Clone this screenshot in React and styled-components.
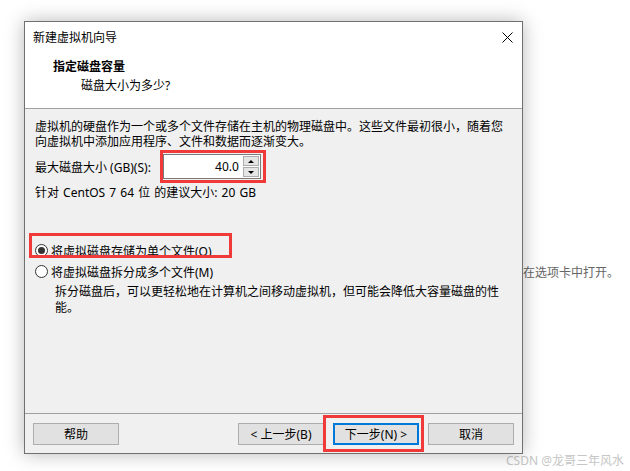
import React from 'react';
import styled, { createGlobalStyle } from 'styled-components';

const GlobalStyle = createGlobalStyle`
  html, body {
    margin: 0;
    padding: 0;
    background: #fff;
  }
  body {
    font-family: "Noto Sans", "Noto Sans CJK SC", sans-serif;
    font-size: 12px;
    color: #000;
  }
`;

const Page = styled.div`
  position: relative;
  width: 630px;
  height: 471px;
  overflow: hidden;
  box-sizing: border-box;
  padding: 21px 0 0 24px;
  display: flex;
  align-items: flex-start;
`;

const BackText = styled.div`
  margin: 244px 0 0 -12px;
  color: #666;
  line-height: 16px;
  white-space: nowrap;
`;

const Dialog = styled.div`
  position: relative;
  z-index: 1;
  flex-shrink: 0;
  width: 499px;
  height: 433px;
  box-sizing: border-box;
  border: 1px solid #707070;
  background: #f0f0f0;
  box-shadow: 0 0 18px rgba(0, 0, 0, 0.28);
  display: flex;
  flex-direction: column;
`;

const Header = styled.div`
  flex-shrink: 0;
  height: 86px;
  background: #fff;
  border-bottom: 1px solid #a0a0a0;
`;

const TitleBar = styled.div`
  height: 30px;
  padding: 0 9px 0 8px;
  display: flex;
  align-items: center;
  justify-content: space-between;
`;

const Heading = styled.div`
  margin-top: 7px;
  padding-left: 28px;
  line-height: 16px;
  font-weight: bold;
`;

const SubHeading = styled.div`
  margin-top: 3px;
  padding-left: 56px;
  line-height: 16px;
`;

const Body = styled.div`
  flex: 1;
  padding: 10px 0 0 10px;
  display: flex;
  flex-direction: column;
  align-items: flex-start;
`;

const Para = styled.div`
  line-height: 15px;
  white-space: nowrap;
`;

const SizeRow = styled.div`
  margin-top: 5px;
  display: flex;
  align-items: center;
  gap: 12px;
`;

const Mark = styled.div`
  position: relative;
  &::after {
    content: '';
    position: absolute;
    box-sizing: border-box;
    top: ${p => p.$top}px;
    left: ${p => p.$left}px;
    width: ${p => p.$w}px;
    height: ${p => p.$h}px;
    border: 3px solid #f03a3a;
    pointer-events: none;
  }
`;

const NumberBox = styled.div`
  width: 98px;
  height: 25px;
  box-sizing: border-box;
  border: 1px solid #7a7a7a;
  background: #fff;
  display: flex;
  align-items: stretch;
`;

const NumberValue = styled.div`
  flex: 1;
  text-align: right;
  padding-right: 4px;
  line-height: 23px;
`;

const Spinner = styled.div`
  width: 16px;
  padding: 1px 1px 1px 0;
  display: flex;
  flex-direction: column;
  gap: 1px;
`;

const SpinButton = styled.div`
  flex: 1;
  border: 1px solid #adadad;
  background: #e5e5e5;
  display: flex;
  align-items: center;
  justify-content: center;
  &::before {
    content: '';
    border-left: 3px solid transparent;
    border-right: 3px solid transparent;
    ${p => (p.$down ? 'border-top: 3px solid #000;' : 'border-bottom: 3px solid #000;')}
  }
`;

const Hint = styled.div`
  margin-top: 6px;
  line-height: 15px;
  word-spacing: 1px;
`;

const RadioGroup = styled.div`
  margin-top: 40px;
  display: flex;
  flex-direction: column;
`;

const RadioRow = styled.div`
  height: 21px;
  display: flex;
  align-items: center;
  gap: 3px;
  white-space: nowrap;
`;

const RadioCircle = styled.span`
  width: 13px;
  height: 13px;
  box-sizing: border-box;
  border: 1px solid #333;
  border-radius: 50%;
  background: #fff;
  display: flex;
  align-items: center;
  justify-content: center;
  &::before {
    content: '';
    width: 7px;
    height: 7px;
    border-radius: 50%;
    background: ${p => (p.$checked ? '#333' : 'transparent')};
  }
`;

const Desc = styled.div`
  margin-top: 2px;
  padding-left: 20px;
  line-height: 16px;
  white-space: nowrap;
`;

const Footer = styled.div`
  flex-shrink: 0;
  border-top: 1px solid #a0a0a0;
  padding: 9px 8px 8px;
  display: flex;
  align-items: center;
  gap: 9px;
`;

const Spacer = styled.div`
  flex: 1;
`;

const Button = styled.div`
  width: 86px;
  height: 22px;
  box-sizing: border-box;
  border: ${p => (p.$default ? '2px solid #0078d7' : '1px solid #adadad')};
  background: #e1e1e1;
  display: flex;
  align-items: center;
  justify-content: center;
  white-space: nowrap;
`;

const Watermark = styled.div`
  position: absolute;
  left: 506px;
  top: 452px;
  font-size: 12px;
  line-height: 17px;
  color: #c6c6c6;
  white-space: nowrap;
`;

const CloseIcon = () => (
  <svg width="11" height="11" viewBox="0 0 11 11">
    <path d="M0.5 0.5 L10.5 10.5 M10.5 0.5 L0.5 10.5" stroke="#000" strokeWidth="1" />
  </svg>
);

const App = () => (
  <Page>
    <GlobalStyle />
    <Dialog>
      <Header>
        <TitleBar>
          <span>新建虚拟机向导</span>
          <CloseIcon />
        </TitleBar>
        <Heading>指定磁盘容量</Heading>
        <SubHeading>磁盘大小为多少?</SubHeading>
      </Header>
      <Body>
        <Para>
          虚拟机的硬盘作为一个或多个文件存储在主机的物理磁盘中。这些文件最初很小，随着您
          <br />
          向虚拟机中添加应用程序、文件和数据而逐渐变大。
        </Para>
        <SizeRow>
          <span>最大磁盘大小 (GB)(S):</span>
          <Mark $top={-4} $left={-3} $w={106} $h={33}>
            <NumberBox>
              <NumberValue>40.0</NumberValue>
              <Spinner>
                <SpinButton />
                <SpinButton $down />
              </Spinner>
            </NumberBox>
          </Mark>
        </SizeRow>
        <Hint>针对 CentOS 7 64 位 的建议大小: 20 GB</Hint>
        <RadioGroup>
          <Mark $top={-7} $left={-6} $w={203} $h={25}>
            <RadioRow>
              <RadioCircle $checked />
              将虚拟磁盘存储为单个文件(O)
            </RadioRow>
          </Mark>
          <RadioRow>
            <RadioCircle />
            将虚拟磁盘拆分成多个文件(M)
          </RadioRow>
          <Desc>
            拆分磁盘后，可以更轻松地在计算机之间移动虚拟机，但可能会降低大容量磁盘的性
            <br />
            能。
          </Desc>
        </RadioGroup>
      </Body>
      <Footer>
        <Button>帮助</Button>
        <Spacer />
        <Button>&lt; 上一步(B)</Button>
        <Mark $top={-8} $left={-10} $w={101} $h={37}>
          <Button $default>下一步(N) &gt;</Button>
        </Mark>
        <Button>取消</Button>
      </Footer>
    </Dialog>
    <BackText>以在选项卡中打开。</BackText>
    <Watermark>CSDN @龙哥三年风水</Watermark>
  </Page>
);

export default App;
